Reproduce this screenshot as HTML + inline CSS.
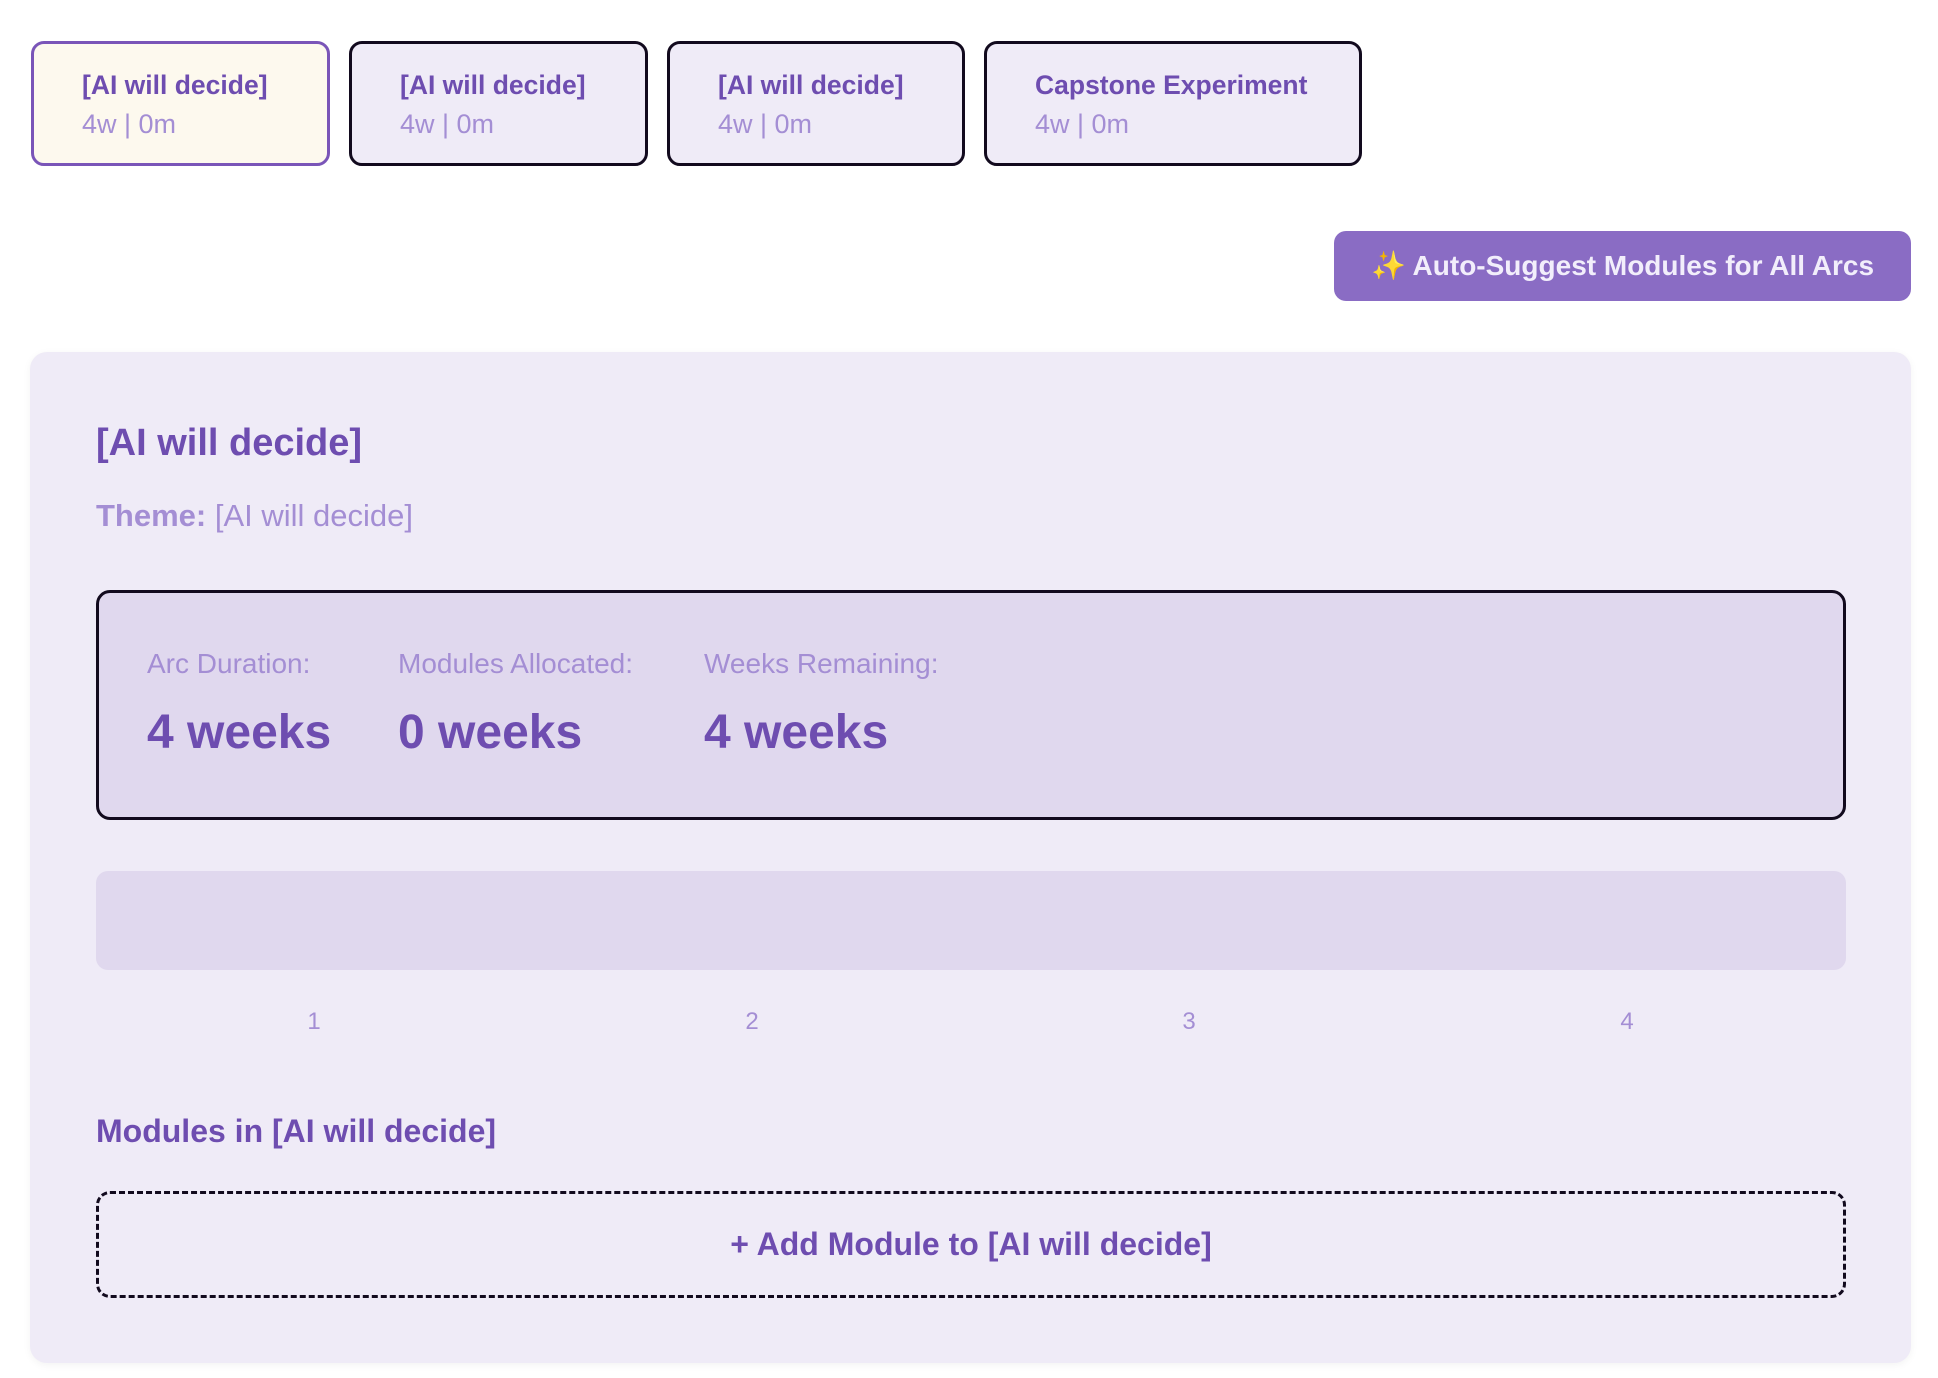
<!DOCTYPE html>
<html><head><meta charset="utf-8"><style>
*{box-sizing:border-box;margin:0;padding:0}
body{width:1938px;height:1378px;background:#fff;font-family:"Liberation Sans",sans-serif;position:relative;overflow:hidden}
.tab{position:absolute;top:41px;height:125px;border:3px solid #120a1e;border-radius:13px;background:#efebf7;padding-left:48px}
.tab.a{border-color:#7a55b8;background:#fdf9ee}
.tab .t{position:absolute;top:26px;font-size:26.5px;font-weight:bold;color:#6e4db0}
.tab .s{position:absolute;top:65px;font-size:27px;color:#a48ed4}
.btn{position:absolute;left:1334px;top:231px;width:577px;height:70px;border-radius:12px;background:#8a6cc4;color:#f2eefb;font-size:28px;font-weight:bold;text-align:center;line-height:70px}
.panel{position:absolute;left:30px;top:352px;width:1881px;height:1011px;background:#efebf7;border-radius:17px;box-shadow:0 2px 8px rgba(0,0,0,0.05)}
.h{position:absolute;left:96px;top:422px;font-size:38px;font-weight:bold;color:#6e4db0}
.th{position:absolute;left:96px;top:498px;font-size:31px;color:#a48ed4}
.stats{position:absolute;left:96px;top:590px;width:1750px;height:230px;border:3px solid #120a1e;border-radius:14px;background:#e0d8ee}
.lab{position:absolute;top:55px;font-size:28px;color:#a48ed4}
.val{position:absolute;top:112px;font-size:48px;font-weight:bold;color:#6e4db0}
.bar{position:absolute;left:96px;top:871px;width:1750px;height:99px;border-radius:12px;background:#e0d8ee}
.n{position:absolute;top:1008px;width:40px;margin-left:-20px;text-align:center;font-size:24px;color:#a48ed4}
.mh{position:absolute;left:96px;top:1113px;font-size:32px;font-weight:bold;color:#6e4db0}
.add{position:absolute;left:96px;top:1191px;width:1750px;height:107px;border:3px dashed #120a1e;border-radius:14px;text-align:center;line-height:101px;font-size:32px;font-weight:bold;color:#6e4db0}
</style></head><body>
<div class="tab a" style="left:31px;width:299px"><div class="t">[AI will decide]</div><div class="s">4w | 0m</div></div>
<div class="tab" style="left:349px;width:299px"><div class="t">[AI will decide]</div><div class="s">4w | 0m</div></div>
<div class="tab" style="left:667px;width:298px"><div class="t">[AI will decide]</div><div class="s">4w | 0m</div></div>
<div class="tab" style="left:984px;width:378px"><div class="t">Capstone Experiment</div><div class="s">4w | 0m</div></div>
<div class="btn"><span style="color:#f5c842">✨</span> Auto-Suggest Modules for All Arcs</div>
<div class="panel"></div>
<div class="h">[AI will decide]</div>
<div class="th"><b>Theme:</b> [AI will decide]</div>
<div class="stats">
<div class="lab" style="left:48px">Arc Duration:</div><div class="val" style="left:48px">4 weeks</div>
<div class="lab" style="left:299px">Modules Allocated:</div><div class="val" style="left:299px">0 weeks</div>
<div class="lab" style="left:605px">Weeks Remaining:</div><div class="val" style="left:605px">4 weeks</div>
</div>
<div class="bar"></div>
<div class="n" style="left:314px">1</div><div class="n" style="left:752px">2</div><div class="n" style="left:1189px">3</div><div class="n" style="left:1627px">4</div>
<div class="mh">Modules in [AI will decide]</div>
<div class="add">+ Add Module to [AI will decide]</div>
</body></html>
